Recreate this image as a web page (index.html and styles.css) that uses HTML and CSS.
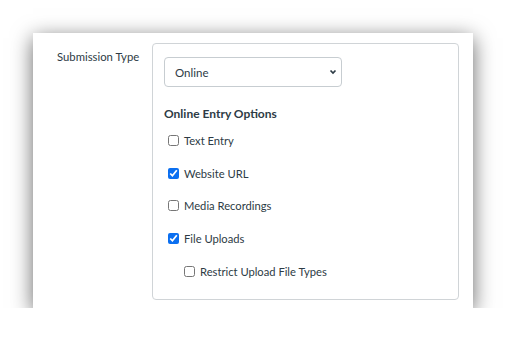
FILE: index.html
```html
<!DOCTYPE html>
<html lang="en">
<head>
  <meta charset="UTF-8" />
  <title>Submission Type</title>
  <link rel="stylesheet" href="styles.css">
</head>
<body>

  <div class="card">
    <div class="field-label">Submission Type</div>
    <div class="field-box">
      <div class="select-wrap">
        <select class="type-select">
          <option>Online</option>
          <option>On Paper</option>
          <option>No Submission</option>
        </select>
        <svg class="chevron" width="8" height="6" viewBox="0 0 8 6">
          <path d="M1.5 1.5 L4 4 L6.5 1.5" fill="none" stroke="#2d3b45" stroke-width="1.7"/>
        </svg>
      </div>
      <h3>Online Entry Options</h3>
      <div class="options">
        <label class="option"><input type="checkbox" /> Text Entry</label>
        <label class="option"><input type="checkbox" checked /> Website URL</label>
        <label class="option"><input type="checkbox" /> Media Recordings</label>
        <label class="option"><input type="checkbox" checked /> File Uploads</label>
        <label class="option sub"><input type="checkbox" /> Restrict Upload File Types</label>
      </div>
    </div>
  </div>

</body>
</html>
```

FILE: styles.css
```css
body {
  margin: 0;
  background: #fff;
  font-family: Lato, "Noto Sans", sans-serif;
  color: #2d3b45;
}

.card {
  margin: 33px 0 0 33px;
  width: 440px;
  height: 275px;
  box-sizing: border-box;
  padding: 10px 14px 8px 24px;
  background: #fff;
  box-shadow: 0 5px 20px rgba(0,0,0,0.6);
  display: flex;
}

.field-label {
  width: 95px;
  font-size: 11.3px;
  padding-top: 7px;
  flex-shrink: 0;
}

.field-box {
  flex: 1;
  border: 1px solid #d0d4d7;
  border-radius: 4px;
  padding: 13px 12px 0 11px;
}

.select-wrap {
  position: relative;
  width: 178px;
}

.type-select {
  appearance: none;
  width: 178px;
  height: 30px;
  border: 1px solid #c7cdd1;
  border-radius: 4px;
  background: #fff;
  font-family: inherit;
  font-size: 11.5px;
  color: #2d3b45;
  padding: 0 10px;
}

.chevron {
  position: absolute;
  right: 5px;
  top: 12px;
  pointer-events: none;
}

.field-box h3 {
  font-size: 12px;
  font-weight: bold;
  margin: 19px 0 3px 0;
}

.options {
  display: flex;
  flex-direction: column;
}

.option {
  display: flex;
  align-items: center;
  height: 32.7px;
  font-size: 11.2px;
}

.option input {
  width: 11px;
  height: 11px;
  margin: 0 5px 0 4px;
  accent-color: #0b6ff0;
}

.option.sub {
  padding-left: 16px;
}
```
